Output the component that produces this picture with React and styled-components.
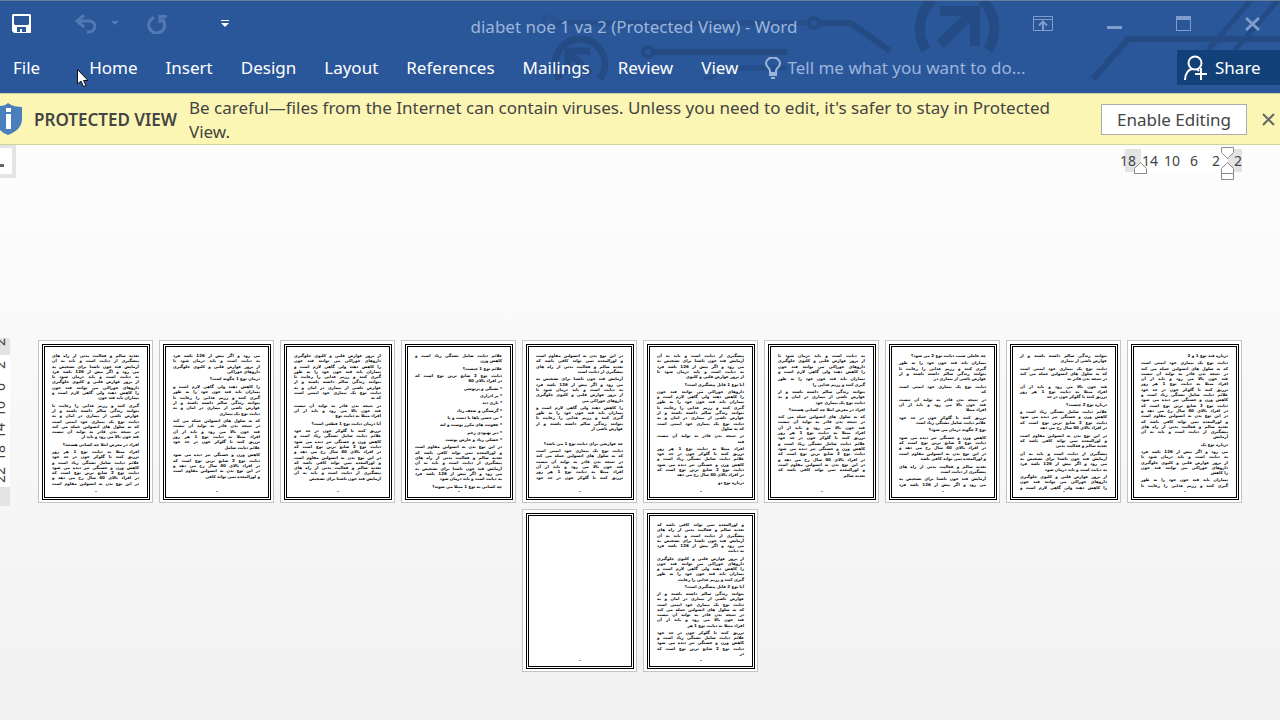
import React from "react";
import styled, { createGlobalStyle } from "styled-components";

const colors = {
  word: "#2a579a",
  pattern: "#244b84",
  share: "#124078",
  faded: "#9db5da",
  disabled: "#5379b3",
  control: "#7f9cca",
  banner: "#fcf6b4",
  ink: "#444444",
};

const tabs = ["Home", "Insert", "Design", "Layout", "References", "Mailings", "Review", "View"];

const rulerMarks = ["18", "14", "10", "6", "2", "2"];
const sideMarks = ["2", "2", "6", "10", "14", "18", "22"];

const bodyLines = [
  "دیابت نوع یک بیماری خود ایمنی است",
  "که به سلول های انسولین حمله می کند",
  "در نتیجه بدن قادر به تولید آن نیست",
  "قند خون بالا می رود و باید از آن",
  "افراد مبتلا به دیابت نوع 1 هر روز",
  "تزریق کنند تا گلوکز خون در حد خود",
  "علائم دیابت شامل تشنگی زیاد است و",
  "کاهش وزن و خستگی نیز دیده می شود",
  "دیابت نوع 2 شایع ترین نوع است که",
  "در افراد بالای 40 سال رخ می دهد و",
  "در این نوع بدن به انسولین مقاوم است",
  "و لوزالمعده نمی تواند کافی باشد که",
  "تغذیه سالم و فعالیت بدنی از راه های",
  "پیشگیری از دیابت است و باید به آن",
  "آزمایش قند خون ناشتا برای تشخیص به",
  "می رود و اگر بیش از 126 باشد فرد",
  "به دیابت است و باید درمان شود تا",
  "از بروز عوارض قلبی و کلیوی جلوگیری",
  "داروهای خوراکی می توانند قند خون",
  "را کاهش دهند ولی گاهی لازم است و",
  "بیماران باید قند خون خود را به طور",
  "گیری کنند و رژیم غذایی را رعایت تا",
  "بتوانند زندگی سالم داشته باشند و از",
  "عوارض ناشی از بیماری در امان و به",
];

const p = (lines, last = 1) => ({ lines, last });
const h = (text) => ({ text });

// Reading order, the first sheet sits on the right
const sheets = [
  {
    height: 135,
    blocks: [h("درباره قند نوع 1 و 2"), p(15, 0.15), h("درباره نوع یک"), p(5, 0.25), p(2)],
  },
  {
    height: 137,
    blocks: [p(2, 0.45), p(3, 0.6), p(3, 0.85), h("درباره نوع 2 چیست؟"), p(4, 0.85), p(3, 0.65), p(4, 0.85), p(3)],
  },
  {
    height: 134,
    blocks: [
      h("چه عاملی سبب دیابت نوع 2 می شود؟"),
      p(4, 0.65),
      p(2, 0.15),
      p(3, 0.3),
      p(2, 0.85),
      h("نوع 2 چگونه درمان می شود؟"),
      p(5, 0.8),
      p(2, 0.5),
      p(2),
    ],
  },
  {
    height: 125,
    blocks: [p(4), p(2, 0.7), p(3, 0.7), h("افراد در معرض ابتلا چه کسانی هستند؟"), p(12, 0.2)],
  },
  {
    height: 132,
    blocks: [
      p(5, 0.85),
      h("آیا نوع 1 قابل پیشگیری است؟"),
      p(8, 0.35),
      p(2, 0.15),
      p(6, 0.9),
      h("درباره نوع دو"),
    ],
  },
  {
    height: 127,
    blocks: [p(4, 0.55), p(5, 0.5), p(5, 0.35), h(""), h("چه عوارضی برای دیابت نوع 1 می باشد؟"), p(6)],
  },
  {
    height: 136,
    blocks: [
      p(2, 0.25),
      h("علائم نوع 1 چیست؟"),
      p(2, 0.4),
      h("* تشنگی و پرنوشی"),
      h("* پر ادراری"),
      h("* تاری دید"),
      h("* گرسنگی و ضعف زیاد"),
      h("* بی حسی پاها یا دست و پا"),
      h("* عفونت های مکرر پوست و لثه"),
      h("* دیر بهبودی زخم"),
      h("* خشکی زیاد و خارش پوست"),
      p(7, 0.9),
      h("چه کسانی به نوع 1 مبتلا می شوند؟"),
    ],
  },
  {
    height: 128,
    blocks: [p(9, 0.2), p(3, 0.65), h("آیا درمان دیابت نوع 1 قطعی است؟"), p(10, 0.9)],
  },
  {
    height: 126,
    blocks: [p(4, 0.35), h("درمان نوع 1 چگونه است؟"), p(6, 0.6), p(6, 0.45), p(5, 0.75)],
  },
  {
    height: 133,
    blocks: [p(9, 0.45), p(7, 0.85), h("افراد در معرض ابتلا چه کسانی هستند؟"), p(7)],
  },
  {
    height: 134,
    blocks: [p(6, 0.2), p(5, 0.85), h("آیا نوع 2 قابل پیشگیری است؟"), p(7, 0.85), p(5, 0.15)],
  },
  { height: 134, blocks: [] },
];

const Block = ({ block, start }) => {
  if (!block.lines) {
    return (
      <Paragraph $lines={1}>
        <Line>{block.text}</Line>
      </Paragraph>
    );
  }
  const rows = [];
  for (let i = 0; i < block.lines; i++) {
    const text = bodyLines[(start + i) % bodyLines.length];
    const words = text.split(" ");
    const partial = i === block.lines - 1 && block.last < 1;
    const shown = partial ? words.slice(0, Math.max(1, Math.round(words.length * block.last))).join(" ") : text;
    rows.push(
      <Line key={i} $full={!partial}>
        {shown}
      </Line>
    );
  }
  return <Paragraph $lines={block.lines}>{rows}</Paragraph>;
};

const Sheet = ({ sheet, offset }) => {
  let start = offset;
  return (
    <Paper>
      <Frame>
        <SheetBody $height={sheet.height}>
          {sheet.blocks.map((block, i) => {
            const at = start;
            start += block.lines || 0;
            return <Block key={i} block={block} start={at} />;
          })}
        </SheetBody>
        <PageNumber />
      </Frame>
    </Paper>
  );
};

const Circuit = () => (
  <Pattern viewBox="540 0 740 80" width="740" height="80" fill="none" stroke={colors.pattern}>
    <circle cx="549" cy="22" r="6" strokeWidth="4" opacity="0.5" />
    <path d="M556 22H808" strokeWidth="5" opacity="0.6" />
    <circle cx="814" cy="22" r="5" strokeWidth="4" />
    <path d="M820 22H851L890 50" strokeWidth="6" />
    <path d="M560 78A25 25 0 1 1 600 78" strokeWidth="7" />
    <path d="M590 50H568V72M569 51L591 73" strokeWidth="7" />
    <circle cx="648" cy="51" r="5" strokeWidth="4" />
    <path d="M654 51H787" strokeWidth="6" />
    <path d="M733 67H787" strokeWidth="5" opacity="0.7" />
    <path d="M704 78Q712 78 715 73" strokeWidth="4" opacity="0.6" />
    <path d="M926 49A40 40 0 0 1 932 -1M982 -1A40 40 0 0 1 988 49" strokeWidth="10" />
    <path d="M940 10H975V45M973 12L940 43" strokeWidth="10" />
    <path d="M1093 78L1128 38H1280" strokeWidth="6" />
    <path d="M1208 49L1251 -1M1235 49L1278 -1" strokeWidth="5" />
  </Pattern>
);

const App = () => {
  let counter = 0;
  return (
    <Window>
      <GlobalStyle />
      <Header>
        <Circuit />
        <TitleBar>
          <QuickAccess>
            <IconButton aria-label="Save">
              <svg width="20" height="20" viewBox="0 0 20 20">
                <path fill="#fff" fillRule="evenodd" d="M1 0H18L19 1V19H2L0 17V1ZM2 2V10L3 11H16L17 10V2ZM5 13V18H8V15H10V18H14V13Z" />
              </svg>
            </IconButton>
            <IconButton aria-label="Undo" $left={43}>
              <svg width="22" height="20" viewBox="0 0 22 20" fill="none" stroke={colors.disabled} strokeWidth="3">
                <path d="M9 1L2 7L9 13M2 7H14C22 7 22 18 13 18H12" />
              </svg>
            </IconButton>
            <IconButton aria-label="Undo history" $left={14}>
              <svg width="8" height="5" viewBox="0 0 8 5">
                <path fill={colors.disabled} d="M0 0H8L4 4Z" />
              </svg>
            </IconButton>
            <IconButton aria-label="Repeat" $left={28}>
              <svg width="20" height="20" viewBox="0 0 20 20" fill="none" stroke={colors.disabled} strokeWidth="3">
                <path d="M7 3.500A8 8 0 1 0 15 5" />
                <path d="M13 9V2.500H20" />
              </svg>
            </IconButton>
            <IconButton aria-label="Customize Quick Access Toolbar" $left={54}>
              <svg width="8" height="8" viewBox="0 0 8 8" fill="#fff">
                <path d="M0 0H8V1H0ZM0 3H8L4 7Z" />
              </svg>
            </IconButton>
          </QuickAccess>
          <Title>diabet noe 1 va 2 (Protected View) - Word</Title>
          <WindowControls>
            <IconButton aria-label="Ribbon Display Options">
              <svg width="20" height="16" viewBox="0 0 20 16" fill="none" stroke={colors.control}>
                <path d="M.5 .5H19.500V14.500H.5ZM0 3.500H20" />
                <path strokeWidth="2" d="M10 14V6M6 9.500L10 5.500L14 9.500" />
              </svg>
            </IconButton>
            <IconButton aria-label="Minimize">
              <svg width="15" height="16" viewBox="0 0 15 16">
                <path fill={colors.control} d="M0 10H15V13H0Z" />
              </svg>
            </IconButton>
            <IconButton aria-label="Maximize">
              <svg width="15" height="16" viewBox="0 0 15 16">
                <path fill={colors.control} fillRule="evenodd" d="M0 0H15V15H0ZM1 4V14H14V4Z" />
              </svg>
            </IconButton>
            <IconButton aria-label="Close">
              <svg width="15" height="16" viewBox="0 0 15 16" stroke={colors.control} strokeWidth="3">
                <path d="M1 2L14 14M14 2L1 14" />
              </svg>
            </IconButton>
          </WindowControls>
        </TitleBar>
        <Ribbon>
          <FileTab>File</FileTab>
          <Tabs>
            {tabs.map((tab) => (
              <Tab key={tab}>{tab}</Tab>
            ))}
          </Tabs>
          <TellMe>
            <svg width="16" height="22" viewBox="0 0 16 22" fill="none" stroke={colors.faded} strokeWidth="2">
              <path d="M5 16V14C5 11 1 10 1 6.500A7 6 0 0 1 15 6.500C15 10 11 11 11 14V16Z" />
              <path d="M4 18H12M6 21H10" />
            </svg>
            <TellMeInput aria-label="Tell me what you want to do" placeholder="Tell me what you want to do..." />
          </TellMe>
          <Share>
            <svg width="24" height="26" viewBox="0 0 24 26" fill="none" stroke="#fff" strokeWidth="2">
              <circle cx="11" cy="8" r="6.500" />
              <path d="M1 25C1 18 5 14 9 14M13 14L15 16M11 19H23M17 13V25" />
            </svg>
            Share
          </Share>
        </Ribbon>
      </Header>

      <Banner>
        <svg width="22" height="34" viewBox="0 0 22 34">
          <path fill="#4a7fbe" d="M8 1C12 4 17 5 22 5V17C22 25 16 30 8 33C5 32 2 30 0 28V4C3 4 6 3 8 1Z" />
          <path fill="#fff" d="M6 12H11V27H6ZM6 6H11V10H6Z" />
        </svg>
        <BannerTitle>PROTECTED VIEW</BannerTitle>
        <BannerText>
          Be careful—files from the Internet can contain viruses. Unless you need to edit, it's safer to stay in
          Protected View.
        </BannerText>
        <EnableButton>Enable Editing</EnableButton>
        <IconButton aria-label="Close message" $left={15}>
          <svg width="14" height="14" viewBox="0 0 14 14" stroke="#666" strokeWidth="2">
            <path d="M1 2L12 13M12 2L1 13" />
          </svg>
        </IconButton>
      </Banner>

      <Workspace>
        <RulerRow>
          <TabSelector aria-label="Tab stop">
            <TabMark />
          </TabSelector>
          <Ruler>
            {rulerMarks.map((mark, i) => (
              <RulerMark key={i}>{mark}</RulerMark>
            ))}
            <Indents width="110" height="34" viewBox="0 0 110 34" fill="#fff" stroke="#8a8a8a">
              <path d="M8.500 26.500V21.500L14.500 15.500L20.500 21.500V26.500Z" />
              <path d="M95.500 .5H107.500V5.500L101.500 11.500L95.500 5.500Z" />
              <path d="M95.500 26.500V21.500L101.500 15.500L107.500 21.500V26.500ZM95.500 26.500H107.500V32.500H95.500Z" />
            </Indents>
          </Ruler>
        </RulerRow>
        <Canvas>
          <SideRuler>
            {sideMarks.map((mark, i) => (
              <SideMark key={i}>{mark}</SideMark>
            ))}
          </SideRuler>
          <Sheets>
            {sheets.map((sheet, i) => {
              const offset = counter;
              counter += sheet.blocks.reduce((sum, b) => sum + (b.lines || 0), 0);
              return <Sheet key={i} sheet={sheet} offset={offset} />;
            })}
          </Sheets>
        </Canvas>
      </Workspace>

      <Cursor width="12" height="19" viewBox="0 0 12 19">
        <path fill="#fff" stroke="#111" d="M.5 .5V15L4 12L6.500 17.500L9 16.500L6.500 11.500H11Z" />
      </Cursor>
    </Window>
  );
};

export default App;

const GlobalStyle = createGlobalStyle`
  * {
    box-sizing: border-box;
  }

  body {
    margin: 0;
    font-family: "Noto Sans", "Open Sans", sans-serif;
    font-size: 17px;
    color: ${colors.ink};
  }

  button, input {
    font: inherit;
    color: inherit;
    border: 0;
    padding: 0;
    background: none;
  }
`;

const Window = styled.div`
  position: relative;
  min-height: 100vh;
  display: flex;
  flex-direction: column;
  overflow: hidden;
`;

const Header = styled.header`
  position: relative;
  background-color: ${colors.word};
  border-top: 1px solid #64809f;
  color: #fff;
`;

const Pattern = styled.svg`
  position: absolute;
  top: 0;
  right: 0;
`;

const TitleBar = styled.div`
  position: relative;
  height: 49px;
  padding: 0 20px 4px 12px;
  display: grid;
  grid-template-columns: 1fr auto 1fr;
  align-items: center;
`;

const QuickAccess = styled.div`
  display: flex;
  align-items: center;
`;

const IconButton = styled.button`
  display: flex;
  flex-shrink: 0;
  margin-left: ${(props) => props.$left || 0}px;
`;

const Title = styled.div`
  padding: 6px 4px 0 0;
  color: ${colors.faded};
`;

const WindowControls = styled.div`
  display: flex;
  justify-content: flex-end;
  align-items: center;
  gap: 54px;
`;

const Ribbon = styled.div`
  position: relative;
  height: 43px;
  padding: 0 0 8px 13px;
  display: flex;
  align-items: center;
`;

const Tab = styled.button`
  white-space: nowrap;
`;

const FileTab = styled(Tab)`
  margin-right: 49px;
`;

const Tabs = styled.nav`
  display: flex;
  gap: 28px;
`;

const TellMe = styled.label`
  flex: 1;
  margin-left: 27px;
  display: flex;
  align-items: center;
  gap: 6px;
`;

const TellMeInput = styled.input`
  flex: 1;
  min-width: 0;

  &::placeholder {
    color: ${colors.faded};
    opacity: 1;
  }
`;

const Share = styled.button`
  width: 103px;
  height: 35px;
  padding-left: 7px;
  display: flex;
  align-items: center;
  gap: 7px;
  background-color: ${colors.share};
`;

const Banner = styled.div`
  padding-right: 4px;
  min-height: 52px;
  display: flex;
  align-items: center;
  background-color: ${colors.banner};
  border-top: 1px solid #c9cf9f;
  border-bottom: 1px solid #d3d29a;
`;

const BannerTitle = styled.strong`
  margin-left: 12px;
  font-weight: 600;
  white-space: nowrap;
`;

const BannerText = styled.p`
  flex: 1;
  margin: 0 40px 0 12px;
  padding-top: 2px;
  line-height: 24px;
`;

const EnableButton = styled.button`
  width: 146px;
  height: 31px;
  flex-shrink: 0;
  background-color: #fff;
  border: 1px solid #ababab;
`;

const Workspace = styled.main`
  flex: 1;
  background: linear-gradient(#fdfdfd, #f1f1f1);
`;

const RulerRow = styled.div`
  display: flex;
  justify-content: space-between;
  align-items: flex-start;
  padding-right: 31px;
`;

const TabSelector = styled.button`
  width: 16px;
  height: 33px;
  display: flex;
  align-items: center;
  background-color: #fff;
  border: solid #e4e4e4;
  border-width: 3px 4px 4px 0;
`;

const TabMark = styled.span`
  width: 4px;
  height: 3px;
  margin-top: 8px;
  background-color: #666;
`;

const Ruler = styled.div`
  position: relative;
  height: 23px;
  margin-top: 4px;
  display: grid;
  grid-template-columns: repeat(6, 22px);
  align-items: center;
  background: linear-gradient(
    to right,
    transparent 8px,
    #e3e3e3 8px,
    #e3e3e3 24px,
    #fff 24px,
    #fff 111px,
    #e3e3e3 111px,
    #e3e3e3 125px,
    transparent 125px
  );
`;

const RulerMark = styled.span`
  font-size: 14px;
  text-align: center;
`;

const Indents = styled.svg`
  position: absolute;
  top: -2px;
  left: 9px;
`;

const Canvas = styled.div`
  display: flex;
  align-items: flex-start;
  padding: 160px 10px 0 0;
`;

const SideRuler = styled.div`
  width: 10px;
  height: 168px;
  display: grid;
  grid-template-rows: 16px repeat(6, 22px);
  align-items: center;
  overflow: hidden;
  background: linear-gradient(#e3e3e3 17px, #fff 17px, #fff 149px, #e3e3e3 149px);
`;

const SideMark = styled.span`
  width: 20px;
  margin-left: -10px;
  line-height: 20px;
  font-size: 14px;
  writing-mode: vertical-rl;
  transform: rotate(180deg);

  &:first-child {
    align-self: start;
  }
`;

const Sheets = styled.div`
  flex: 1;
  margin-top: 2px;
  display: flex;
  flex-wrap: wrap;
  justify-content: center;
  gap: 6px;
  direction: rtl;
`;

const Paper = styled.article`
  width: 115px;
  height: 163px;
  padding: 3px 2px 2px 3px;
  background-color: #fff;
  border: 1px solid #c4c4c4;
`;

const Frame = styled.div`
  height: 100%;
  padding: 6px 8px 5px 7px;
  display: flex;
  flex-direction: column;
  justify-content: space-between;
  align-items: center;
  border: 3px double #000;
`;

const SheetBody = styled.div`
  width: 100%;
  height: ${(props) => props.$height}px;
  display: flex;
  flex-direction: column;
  gap: 2px;
`;

const Paragraph = styled.div`
  flex: ${(props) => props.$lines} 1 0;
  min-height: 0;
  display: flex;
  flex-direction: column;
`;

const Line = styled.span`
  flex: 1 1 0;
  min-height: 0;
  font-family: "DejaVu Sans", sans-serif;
  font-size: 4px;
  font-weight: 700;
  line-height: 5px;
  color: #000;
  white-space: nowrap;
  text-align-last: ${(props) => (props.$full ? "justify" : "start")};
`;

const PageNumber = styled.span`
  width: 2px;
  height: 1px;
  background-color: #999;
`;

const Cursor = styled.svg`
  position: absolute;
  top: 69px;
  left: 77px;
`;
